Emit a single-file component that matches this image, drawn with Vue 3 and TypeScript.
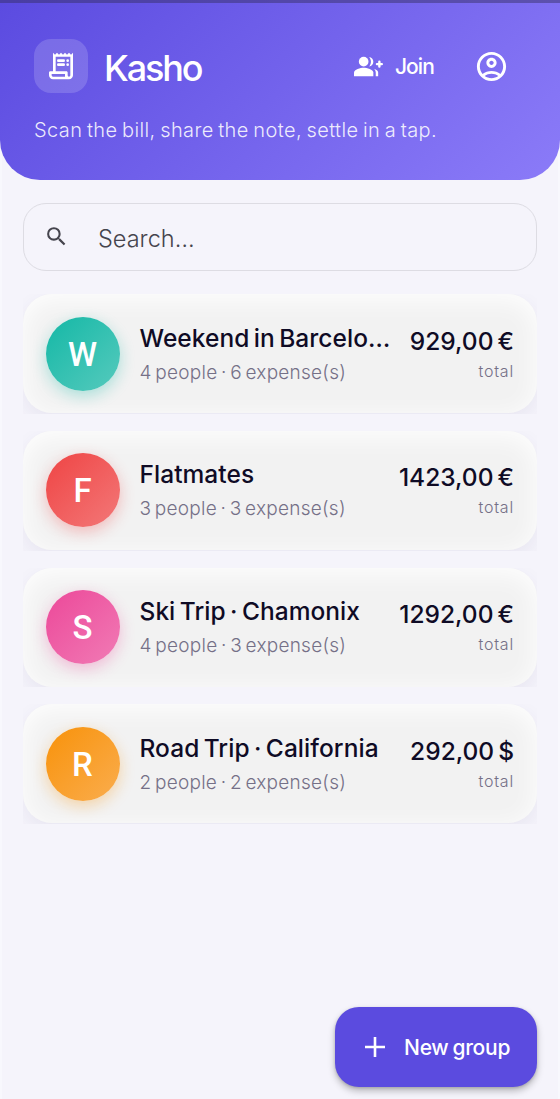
<script setup lang="ts">
interface Group {
  name: string
  people: number
  expenses: number
  total: string
  tone: string
}

const groups: Group[] = [
  { name: 'Weekend in Barcelo…', people: 4, expenses: 6, total: '929,00 €', tone: 'teal' },
  { name: 'Flatmates', people: 3, expenses: 3, total: '1423,00 €', tone: 'red' },
  { name: 'Ski Trip · Chamonix', people: 4, expenses: 3, total: '1292,00 €', tone: 'pink' },
  { name: 'Road Trip · California', people: 2, expenses: 2, total: '292,00 $', tone: 'orange' },
]
</script>

<template>
  <main class="screen">
    <header class="hero">
      <div class="bar">
        <span class="logo">
          <svg width="32" height="32" viewBox="0 0 24 24" fill="currentColor">
            <path d="M19.5 3.5 18 2l-1.5 1.5L15 2l-1.5 1.5L12 2l-1.5 1.5L9 2 7.5 3.5 6 2v14H4c-.55 0-1 .45-1 1v2c0 1.66 1.34 3 3 3h12c1.66 0 3-1.34 3-3V2l-1.5 1.5zM15 20H6c-.55 0-1-.45-1-1v-1h10v2zm4-1c0 .55-.45 1-1 1s-1-.45-1-1v-2c0-.55-.45-1-1-1H8V5h11v14z" />
            <rect x="9" y="7" width="6" height="2" rx="1" />
            <rect x="9" y="10" width="6" height="2" rx="1" />
            <circle cx="17" cy="8" r="1" />
            <circle cx="17" cy="11" r="1" />
          </svg>
        </span>
        <h1 class="brand">Kasho</h1>
        <button class="join" type="button">
          <svg width="29" height="29" viewBox="0 0 24 24" fill="currentColor">
            <path d="M23 9h-1V8a1 1 0 0 0-2 0v1h-1a1 1 0 0 0 0 2h1v1a1 1 0 0 0 2 0v-1h1a1 1 0 0 0 0-2z" />
            <circle cx="8" cy="8" r="4" />
            <path d="M8 13c-2.67 0-8 1.34-8 4v3h16v-3c0-2.66-5.33-4-8-4z" />
            <path d="M12.51 4.05C13.43 5.11 14 6.49 14 8s-.57 2.89-1.49 3.95C14.47 11.7 16 10.04 16 8s-1.53-3.7-3.49-3.95z" />
            <path d="M16.53 13.83C17.42 14.66 18 15.7 18 17v3h2v-3c0-1.45-1.59-2.51-3.47-3.17z" />
          </svg>
          <span>Join</span>
        </button>
        <button class="account" type="button" aria-label="Account">
          <svg width="35" height="35" viewBox="0 0 24 24" fill="currentColor">
            <path d="M12 2C6.48 2 2 6.48 2 12s4.48 10 10 10 10-4.48 10-10S17.52 2 12 2zM7.35 18.5C8.66 17.56 10.26 17 12 17s3.34.56 4.65 1.5C15.34 19.44 13.74 20 12 20s-3.34-.56-4.65-1.5zm10.79-1.38C16.45 15.8 14.32 15 12 15s-4.45.8-6.14 2.12C4.7 15.73 4 13.95 4 12c0-4.42 3.58-8 8-8s8 3.58 8 8c0 1.95-.7 3.73-1.86 5.12zM12 6c-1.93 0-3.5 1.57-3.5 3.5S10.07 13 12 13s3.5-1.57 3.5-3.5S13.93 6 12 6zm0 5c-.83 0-1.5-.67-1.5-1.5S11.17 8 12 8s1.5.67 1.5 1.5S12.83 11 12 11z" />
          </svg>
        </button>
      </div>
      <p class="tagline">Scan the bill, share the note, settle in a tap.</p>
    </header>

    <div class="search">
      <svg width="25" height="25" viewBox="0 0 24 24" fill="currentColor">
        <path d="M15.5 14h-.79l-.28-.27A6.47 6.47 0 0 0 16 9.5 6.5 6.5 0 1 0 9.5 16c1.61 0 3.09-.59 4.23-1.57l.27.28v.79l5 4.99L20.49 19l-4.99-5zm-6 0C7.01 14 5 11.99 5 9.5S7.01 5 9.5 5 14 7.01 14 9.5 11.99 14 9.5 14z" />
      </svg>
      <span>Search…</span>
    </div>

    <ul class="groups">
      <li v-for="g in groups" :key="g.name" class="slot">
        <article class="card">
          <span class="avatar" :class="g.tone">{{ g.name.charAt(0) }}</span>
          <div class="info">
            <h2>{{ g.name }}</h2>
            <p>{{ g.people }} people · {{ g.expenses }} expense(s)</p>
          </div>
          <div class="sum">
            <strong>{{ g.total }}</strong>
            <small>total</small>
          </div>
        </article>
      </li>
    </ul>

    <button class="fab" type="button">
      <svg width="20" height="20" viewBox="0 0 20 20" stroke="currentColor" stroke-width="2.6">
        <path d="M10 0v20M0 10h20" />
      </svg>
      <span>New group</span>
    </button>
  </main>
</template>

<style>
body {
  margin: 0;
  background: #f5f4fb;
}
</style>

<style scoped>
.screen {
  display: flex;
  flex-direction: column;
  box-sizing: border-box;
  width: 560px;
  height: 1099px;
  overflow: hidden;
  background: #f5f4fb;
  box-shadow: inset 2px 0 #f8f8fd, inset -2px 0 #f8f8fd;
  font-family: Inter, "Open Sans", sans-serif;
}
h1, h2, p, ul {
  margin: 0;
  padding: 0;
  font-weight: 400;
}
button {
  border: 0;
  padding: 0;
  background: none;
  color: #fff;
  font: inherit;
}
svg {
  display: block;
  flex: none;
}
.hero {
  box-sizing: border-box;
  height: 180px;
  padding: 36px 34px 0;
  border-top: 3px solid rgba(50, 45, 90, 0.45);
  border-radius: 0 0 40px 40px;
  background: linear-gradient(135deg, #5b4be0, #8b7bf8) border-box;
  color: #fff;
}
.bar {
  display: flex;
  align-items: center;
  height: 54px;
}
.logo {
  display: grid;
  place-items: center;
  width: 54px;
  height: 54px;
  border-radius: 17px;
  background: rgba(255, 255, 255, 0.16);
}
.brand {
  flex: 1;
  margin-left: 16px;
  padding-top: 3px;
  font-size: 36px;
  line-height: 44px;
  font-weight: 500;
  letter-spacing: -2.1px;
}
.join {
  display: flex;
  align-items: center;
  gap: 12px;
  margin-right: 40px;
  font-size: 21px;
  line-height: 28px;
  font-weight: 500;
  letter-spacing: -0.9px;
}
.join span {
  padding-top: 2px;
}
.account {
  margin-right: 17px;
}
.tagline {
  margin-top: 23px;
  font-size: 20px;
  line-height: 28px;
  font-weight: 300;
  letter-spacing: 0.4px;
  word-spacing: -1.5px;
  white-space: nowrap;
  color: rgba(255, 255, 255, 0.88);
}
.search {
  display: flex;
  align-items: center;
  gap: 29px;
  box-sizing: border-box;
  flex: none;
  height: 68px;
  margin: 23px 23px 0;
  padding: 0 20px;
  border: 1px solid #dddce3;
  border-radius: 23px;
  color: #45444d;
  font-size: 23.5px;
  font-weight: 300;
}
.search svg {
  margin-bottom: 2px;
}
.search span {
  padding-top: 3px;
}
.groups {
  display: flex;
  flex-direction: column;
  gap: 17px;
  margin: 23px 23px 0;
  list-style: none;
}
.slot {
  height: 119.8px;
  overflow: hidden;
}
.card {
  display: flex;
  align-items: center;
  box-sizing: border-box;
  height: 119px;
  padding: 0 23px 0 22.5px;
  border-radius: 29px;
  background: #f2f2f2;
  box-shadow: inset 0 5px 26px rgba(255, 255, 255, 0.95), 0 8px 20px rgba(70, 60, 120, 0.07);
}
.avatar {
  flex: none;
  width: 74px;
  height: 74px;
  border-radius: 50%;
  color: #fff;
  font: 500 33px/76px Roboto, sans-serif;
  text-align: center;
}
.teal {
  background: linear-gradient(135deg, #14b8a6, #56cabd);
  box-shadow: 0 5px 15px rgba(20, 184, 166, 0.32);
}
.red {
  background: linear-gradient(135deg, #ef4444, #f37878);
  box-shadow: 0 5px 15px rgba(239, 68, 68, 0.32);
}
.pink {
  background: linear-gradient(135deg, #ec4899, #f17bb5);
  box-shadow: 0 5px 15px rgba(236, 72, 153, 0.32);
}
.orange {
  background: linear-gradient(135deg, #f8920a, #faad4e);
  box-shadow: 0 5px 15px rgba(248, 146, 10, 0.32);
}
.info {
  flex: 1;
  min-width: 0;
  margin-left: 20px;
  white-space: nowrap;
}
.info h2 {
  color: #0f0b25;
  font-size: 24.5px;
  line-height: 34px;
  font-weight: 500;
  letter-spacing: 0.05px;
  word-spacing: -2.2px;
}
.info p {
  margin-top: 4px;
  color: #757087;
  font-size: 19px;
  line-height: 28px;
  font-weight: 300;
  letter-spacing: 0.25px;
  word-spacing: -2px;
}
.sum {
  display: flex;
  flex-direction: column;
  align-items: flex-end;
  white-space: nowrap;
}
.sum strong {
  color: #0f0b25;
  font-size: 24.5px;
  line-height: 32px;
  font-weight: 500;
  word-spacing: -2.5px;
}
.sum small {
  margin-top: 2px;
  color: #757087;
  font-size: 16px;
  line-height: 24px;
  font-weight: 300;
  letter-spacing: 0.8px;
}
.fab {
  display: flex;
  align-items: center;
  align-self: flex-end;
  gap: 19px;
  box-sizing: border-box;
  flex: none;
  width: 202px;
  height: 80px;
  margin: auto 23px 12.5px 0;
  padding-left: 30px;
  border-radius: 24px;
  background: #5b4bdf;
  box-shadow: 0 4px 7px rgba(0, 0, 0, 0.25), 0 1px 3px rgba(0, 0, 0, 0.15);
  font-size: 21px;
  line-height: 28px;
  font-weight: 500;
  letter-spacing: -0.25px;
  word-spacing: -1.5px;
  white-space: nowrap;
}
.fab span {
  padding-top: 3px;
}
</style>
